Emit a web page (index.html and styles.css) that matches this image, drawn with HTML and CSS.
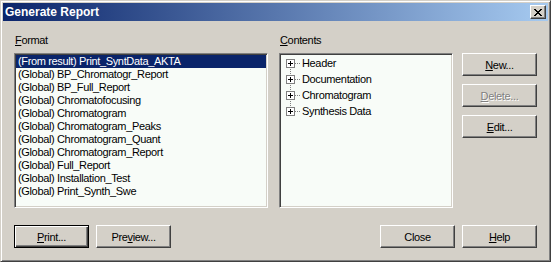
FILE: index.html
```html
<!DOCTYPE html>
<html lang="en">
<head>
  <meta charset="UTF-8" />
  <title>Generate Report</title>
  <link rel="stylesheet" href="styles.css">
</head>
<body>
  <div class="window">
    <div class="titlebar">
      <span class="title">Generate Report</span>
      <button class="close-btn">
        <svg width="8" height="7" viewBox="0 0 8 7" shape-rendering="crispEdges">
          <rect x="0" y="0" width="2" height="1"/><rect x="6" y="0" width="2" height="1"/>
          <rect x="1" y="1" width="2" height="1"/><rect x="5" y="1" width="2" height="1"/>
          <rect x="2" y="2" width="4" height="1"/>
          <rect x="3" y="3" width="2" height="1"/>
          <rect x="2" y="4" width="4" height="1"/>
          <rect x="1" y="5" width="2" height="1"/><rect x="5" y="5" width="2" height="1"/>
          <rect x="0" y="6" width="2" height="1"/><rect x="6" y="6" width="2" height="1"/>
        </svg>
      </button>
    </div>

    <div class="content">
      <div class="main">
        <div class="col-format">
          <div class="caption"><u>F</u>ormat</div>
          <ul class="listbox">
            <li class="selected">(From result) Print_SyntData_AKTA</li>
            <li>(Global) BP_Chromatogr_Report</li>
            <li>(Global) BP_Full_Report</li>
            <li>(Global) Chromatofocusing</li>
            <li>(Global) Chromatogram</li>
            <li>(Global) Chromatogram_Peaks</li>
            <li>(Global) Chromatogram_Quant</li>
            <li>(Global) Chromatogram_Report</li>
            <li>(Global) Full_Report</li>
            <li>(Global) Installation_Test</li>
            <li>(Global) Print_Synth_Swe</li>
          </ul>
        </div>

        <div class="col-contents">
          <div class="caption"><u>C</u>ontents</div>
          <ul class="tree">
            <li>
              <svg class="expander" width="19" height="16" viewBox="0 0 19 16" shape-rendering="crispEdges">
                <line x1="9.5" y1="8" x2="9.5" y2="16" class="dots"/>
                <line x1="14" y1="8.5" x2="19" y2="8.5" class="dots"/>
                <rect x="5.5" y="4.5" width="8" height="8" class="box"/>
                <rect x="7" y="8" width="5" height="1"/><rect x="9" y="6" width="1" height="5"/>
              </svg>
              <span class="node-label">Header</span>
            </li>
            <li>
              <svg class="expander" width="19" height="16" viewBox="0 0 19 16" shape-rendering="crispEdges">
                <line x1="9.5" y1="0" x2="9.5" y2="16" class="dots"/>
                <line x1="14" y1="8.5" x2="19" y2="8.5" class="dots"/>
                <rect x="5.5" y="4.5" width="8" height="8" class="box"/>
                <rect x="7" y="8" width="5" height="1"/><rect x="9" y="6" width="1" height="5"/>
              </svg>
              <span class="node-label">Documentation</span>
            </li>
            <li>
              <svg class="expander" width="19" height="16" viewBox="0 0 19 16" shape-rendering="crispEdges">
                <line x1="9.5" y1="0" x2="9.5" y2="16" class="dots"/>
                <line x1="14" y1="8.5" x2="19" y2="8.5" class="dots"/>
                <rect x="5.5" y="4.5" width="8" height="8" class="box"/>
                <rect x="7" y="8" width="5" height="1"/><rect x="9" y="6" width="1" height="5"/>
              </svg>
              <span class="node-label">Chromatogram</span>
            </li>
            <li>
              <svg class="expander" width="19" height="16" viewBox="0 0 19 16" shape-rendering="crispEdges">
                <line x1="9.5" y1="0" x2="9.5" y2="8" class="dots"/>
                <line x1="14" y1="8.5" x2="19" y2="8.5" class="dots"/>
                <rect x="5.5" y="4.5" width="8" height="8" class="box"/>
                <rect x="7" y="8" width="5" height="1"/><rect x="9" y="6" width="1" height="5"/>
              </svg>
              <span class="node-label">Synthesis Data</span>
            </li>
          </ul>
        </div>

        <div class="side-buttons">
          <button class="btn"><u>N</u>ew...</button>
          <button class="btn" disabled><u>D</u>elete...</button>
          <button class="btn"><u>E</u>dit...</button>
        </div>
      </div>

      <div class="footer">
        <div class="btn-group">
          <button class="btn default"><u>P</u>rint...</button>
          <button class="btn">Pre<u>v</u>iew...</button>
        </div>
        <div class="btn-group">
          <button class="btn">Close</button>
          <button class="btn"><u>H</u>elp</button>
        </div>
      </div>
    </div>
  </div>
</body>
</html>
```

FILE: styles.css
```css
body {
  margin: 0;
  font-family: "Liberation Sans", Arial, sans-serif;
  font-size: 11px;
  letter-spacing: -0.35px;
  color: #000;
}
.window {
  box-sizing: border-box;
  width: 551px;
  height: 262px;
  background: #d4d0c8;
  border: 1px solid;
  border-color: #d4d0c8 #404040 #404040 #d4d0c8;
  box-shadow: inset 1px 1px #fff, inset -1px -1px #808080;
  padding: 2px;
}
.titlebar {
  height: 18px;
  display: flex;
  align-items: center;
  justify-content: space-between;
  padding: 0 2px;
  background: linear-gradient(to right, #0a246a, #a6caf0);
}
.title {
  color: #fff;
  font-weight: bold;
  font-size: 12px;
  letter-spacing: 0;
}
.close-btn {
  box-sizing: border-box;
  width: 16px;
  height: 14px;
  padding: 0;
  display: flex;
  align-items: center;
  justify-content: center;
  background: #d4d0c8;
  border: 1px solid;
  border-color: #fff #404040 #404040 #fff;
  box-shadow: inset -1px -1px #808080;
}
.content {
  padding: 13px 11px 0;
}
.main {
  display: flex;
}
.caption {
  height: 13px;
  line-height: 13px;
  margin-bottom: 6px;
  padding-left: 1px;
}
.col-format {
  width: 254px;
  margin-right: 11px;
}
.col-contents {
  width: 174px;
  margin-right: 9px;
}
.listbox,
.tree {
  box-sizing: border-box;
  height: 155px;
  margin: 0;
  padding: 1px;
  list-style: none;
  background: #f8fcf8;
  border: 1px solid;
  border-color: #808080 #fff #fff #808080;
  box-shadow: inset 1px 1px #404040, inset -1px -1px #d4d0c8;
}
.listbox li {
  height: 13px;
  line-height: 13px;
  padding-left: 2px;
  white-space: nowrap;
}
.listbox li.selected {
  background: #0a246a;
  color: #fff;
}
.tree li {
  display: flex;
  align-items: center;
  height: 16px;
}
.expander {
  display: block;
  flex: none;
}
.expander .dots {
  stroke: #808080;
  stroke-width: 1;
  stroke-dasharray: 1 1;
}
.expander .box {
  fill: #fff;
  stroke: #808080;
}
.node-label {
  padding-left: 2px;
}
.side-buttons {
  padding-top: 19px;
  display: flex;
  flex-direction: column;
  gap: 8px;
}
.btn {
  box-sizing: border-box;
  width: 75px;
  height: 23px;
  padding: 0;
  font: inherit;
  letter-spacing: inherit;
  color: #000;
  background: #d4d0c8;
  border: 1px solid;
  border-color: #fff #404040 #404040 #fff;
  box-shadow: inset -1px -1px #808080, inset 1px 1px #d4d0c8;
}
.btn:disabled {
  color: #808080;
  text-shadow: 1px 1px 0 #fff;
}
.btn.default {
  border-color: #000;
  box-shadow: inset 1px 1px #fff, inset -1px -1px #404040, inset -2px -2px #808080;
}
.footer {
  display: flex;
  justify-content: space-between;
  margin-top: 17px;
}
.btn-group {
  display: flex;
  gap: 7px;
}
```
